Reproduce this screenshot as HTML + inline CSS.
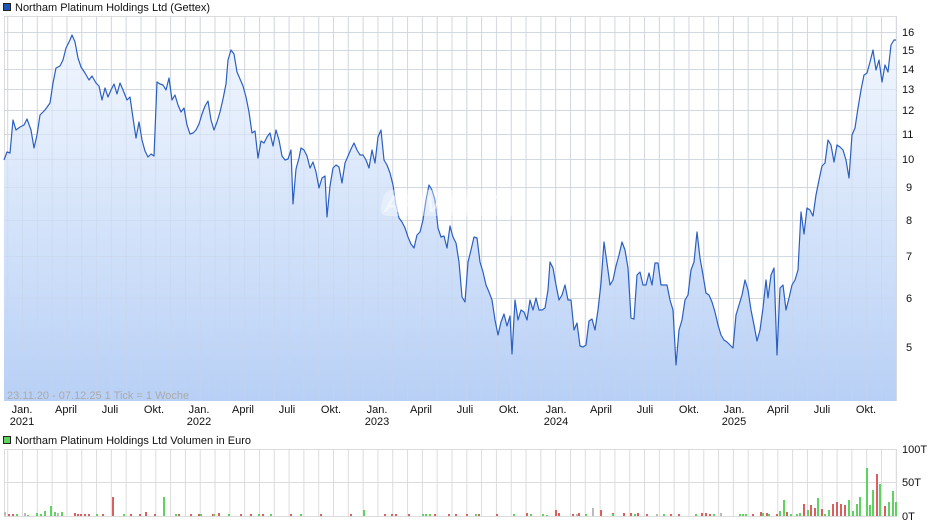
<!DOCTYPE html>
<html><head><meta charset="utf-8"><style>
body{margin:0;background:#fff;width:940px;height:526px;overflow:hidden;font-family:"Liberation Sans",sans-serif}
svg text{font-family:"Liberation Sans",sans-serif;font-size:11px;fill:#111}
</style></head><body>
<svg width="940" height="526" xmlns="http://www.w3.org/2000/svg">
<defs>
<linearGradient id="g" x1="0" y1="0" x2="0" y2="1">
<stop offset="0" stop-color="#f2f7fe"/><stop offset="1" stop-color="#b8d0f6"/></linearGradient>
<pattern id="vg" patternUnits="userSpaceOnUse" x="7.2" y="0" width="14.81" height="10"><rect x="0" y="0" width="1" height="10" fill="#dcdcdc"/></pattern>
<pattern id="vg2" patternUnits="userSpaceOnUse" x="7.2" y="0" width="14.81" height="10"><rect x="0" y="0" width="1" height="10" fill="#c8d4e6" opacity=".45"/></pattern>
</defs>
<rect x="3.5" y="3.5" width="7" height="7" fill="#1e56b8" stroke="#222"/>
<text x="15" y="11">Northam Platinum Holdings Ltd (Gettex)</text>
<rect x="4" y="16" width="893" height="385" fill="url(#vg)"/>
<g stroke="#dcdcdc" stroke-width="1">
<line x1="4" x2="897" y1="16.5" y2="16.5"/><line x1="4" x2="897" y1="32.5" y2="32.5"/><line x1="4" x2="897" y1="50.5" y2="50.5"/><line x1="4" x2="897" y1="69.5" y2="69.5"/><line x1="4" x2="897" y1="89.5" y2="89.5"/><line x1="4" x2="897" y1="110.5" y2="110.5"/><line x1="4" x2="897" y1="134.5" y2="134.5"/><line x1="4" x2="897" y1="159.5" y2="159.5"/><line x1="4" x2="897" y1="187.5" y2="187.5"/><line x1="4" x2="897" y1="220.5" y2="220.5"/><line x1="4" x2="897" y1="256.5" y2="256.5"/><line x1="4" x2="897" y1="298.5" y2="298.5"/><line x1="4" x2="897" y1="347.5" y2="347.5"/>
<line x1="4.5" x2="4.5" y1="16" y2="401"/><line x1="896.5" x2="896.5" y1="16" y2="401"/>
</g>
<path fill="url(#g)" d="M4,160 L7,152 10,153 13,120 16,130 20,127 24,125 27,119 31,130 34,148 37,135 40,115 45,110 50,103 53,83 56,68 60,66 63,60 66,48 70,40 72,35 75,42 78,58 81,67 85,73 89,80 92,76 96,83 99,86 102,100 105,88 108,97 111,90 114,84 117,94 120,83 123,90 127,100 130,97 133,118 136,138 139,122 142,140 145,151 148,157 151,154 154,156 157,82 160,84 163,85 166,90 169,78 172,100 175,95 178,105 181,112 184,108 187,125 190,134 193,133 196,130 199,124 202,114 205,106 208,101 211,120 214,130 217,122 220,112 223,99 226,84 228,60 231,50 234,54 237,72 240,79 243,86 246,97 249,112 252,133 255,131 258,158 261,141 264,143 267,137 270,133 273,146 276,130 279,140 282,156 285,160 288,159 291,150 293,204 296,169 299,158 301,148 304,150 307,156 310,168 313,162 316,172 319,188 322,178 325,176 327,217 330,186 333,168 336,165 339,167 342,183 345,163 348,156 351,149 354,143 357,150 360,155 363,155 366,160 369,168 372,150 375,163 378,137 381,130 384,160 387,165 390,173 393,185 396,205 399,218 402,222 405,228 408,237 411,244 414,248 417,235 420,232 423,220 426,200 429,185 432,190 435,200 438,228 441,237 444,236 447,248 450,226 453,237 456,243 459,262 462,297 465,302 468,262 471,250 474,237 477,238 480,262 483,272 486,285 489,292 492,300 495,320 498,335 501,322 504,314 507,326 510,316 512,354 515,300 518,320 521,310 524,312 527,320 530,300 533,310 536,298 539,310 542,310 545,308 548,290 550,262 553,268 556,285 559,300 562,295 565,285 568,300 571,300 574,330 577,323 580,346 583,347 586,345 589,321 592,319 595,330 598,310 601,283 604,242 607,263 610,285 613,280 616,266 619,255 622,242 625,250 628,268 631,318 634,319 637,275 640,272 643,285 646,285 649,273 652,285 655,263 658,263 661,285 664,285 667,285 670,300 673,310 676,365 679,330 682,320 685,300 688,295 691,270 694,262 697,232 700,258 703,275 706,293 709,295 712,302 715,312 718,325 721,335 724,340 727,342 730,345 733,348 736,315 739,305 742,295 745,280 748,290 751,310 754,325 757,341 760,330 763,308 766,280 768,298 771,275 774,268 777,355 780,288 783,285 786,310 789,298 792,285 795,280 798,270 801,212 804,234 807,208 810,210 813,216 816,195 819,180 822,166 825,163 828,140 831,145 834,162 837,145 840,147 843,150 846,160 849,178 852,135 855,128 858,108 861,90 864,75 867,73 870,62 873,50 876,70 879,60 882,82 885,65 888,72 891,45 894,40 896,40 896,401 4,401 Z"/>
<rect x="4" y="16" width="893" height="385" fill="url(#vg2)"/>
<g stroke="#c8d4e6" stroke-opacity=".45"><line x1="4" x2="896" y1="32.5" y2="32.5"/><line x1="4" x2="896" y1="50.5" y2="50.5"/><line x1="4" x2="896" y1="69.5" y2="69.5"/><line x1="4" x2="896" y1="89.5" y2="89.5"/><line x1="4" x2="896" y1="110.5" y2="110.5"/><line x1="4" x2="896" y1="134.5" y2="134.5"/><line x1="4" x2="896" y1="159.5" y2="159.5"/><line x1="4" x2="896" y1="187.5" y2="187.5"/><line x1="4" x2="896" y1="347.5" y2="347.5"/><line x1="4" x2="896" y1="298.5" y2="298.5"/><line x1="4" x2="896" y1="256.5" y2="256.5"/><line x1="4" x2="896" y1="220.5" y2="220.5"/></g>
<polyline fill="none" stroke="#2c5fc2" stroke-width="1.2" stroke-linejoin="round" points="4,160 7,152 10,153 13,120 16,130 20,127 24,125 27,119 31,130 34,148 37,135 40,115 45,110 50,103 53,83 56,68 60,66 63,60 66,48 70,40 72,35 75,42 78,58 81,67 85,73 89,80 92,76 96,83 99,86 102,100 105,88 108,97 111,90 114,84 117,94 120,83 123,90 127,100 130,97 133,118 136,138 139,122 142,140 145,151 148,157 151,154 154,156 157,82 160,84 163,85 166,90 169,78 172,100 175,95 178,105 181,112 184,108 187,125 190,134 193,133 196,130 199,124 202,114 205,106 208,101 211,120 214,130 217,122 220,112 223,99 226,84 228,60 231,50 234,54 237,72 240,79 243,86 246,97 249,112 252,133 255,131 258,158 261,141 264,143 267,137 270,133 273,146 276,130 279,140 282,156 285,160 288,159 291,150 293,204 296,169 299,158 301,148 304,150 307,156 310,168 313,162 316,172 319,188 322,178 325,176 327,217 330,186 333,168 336,165 339,167 342,183 345,163 348,156 351,149 354,143 357,150 360,155 363,155 366,160 369,168 372,150 375,163 378,137 381,130 384,160 387,165 390,173 393,185 396,205 399,218 402,222 405,228 408,237 411,244 414,248 417,235 420,232 423,220 426,200 429,185 432,190 435,200 438,228 441,237 444,236 447,248 450,226 453,237 456,243 459,262 462,297 465,302 468,262 471,250 474,237 477,238 480,262 483,272 486,285 489,292 492,300 495,320 498,335 501,322 504,314 507,326 510,316 512,354 515,300 518,320 521,310 524,312 527,320 530,300 533,310 536,298 539,310 542,310 545,308 548,290 550,262 553,268 556,285 559,300 562,295 565,285 568,300 571,300 574,330 577,323 580,346 583,347 586,345 589,321 592,319 595,330 598,310 601,283 604,242 607,263 610,285 613,280 616,266 619,255 622,242 625,250 628,268 631,318 634,319 637,275 640,272 643,285 646,285 649,273 652,285 655,263 658,263 661,285 664,285 667,285 670,300 673,310 676,365 679,330 682,320 685,300 688,295 691,270 694,262 697,232 700,258 703,275 706,293 709,295 712,302 715,312 718,325 721,335 724,340 727,342 730,345 733,348 736,315 739,305 742,295 745,280 748,290 751,310 754,325 757,341 760,330 763,308 766,280 768,298 771,275 774,268 777,355 780,288 783,285 786,310 789,298 792,285 795,280 798,270 801,212 804,234 807,208 810,210 813,216 816,195 819,180 822,166 825,163 828,140 831,145 834,162 837,145 840,147 843,150 846,160 849,178 852,135 855,128 858,108 861,90 864,75 867,73 870,62 873,50 876,70 879,60 882,82 885,65 888,72 891,45 894,40 896,40"/>
<rect x="385" y="190" width="140" height="26" rx="8" fill="#fff" opacity=".35" transform="skewX(-12) translate(40,0)"/>
<text x="384" y="212" style="font-size:24px;font-weight:bold;font-style:italic;fill:#fff;opacity:.5">ARIVA.DE</text>
<text x="7" y="399" style="fill:#aaa;font-size:11px">23.11.20 - 07.12.25   1 Tick = 1 Woche</text>
<g>
<text x="902" y="36">16</text><text x="902" y="54">15</text><text x="902" y="73">14</text><text x="902" y="93">13</text><text x="902" y="114">12</text><text x="902" y="138">11</text><text x="902" y="163">10</text><text x="906" y="191">9</text><text x="906" y="224">8</text><text x="906" y="260">7</text><text x="906" y="302">6</text><text x="906" y="351">5</text>
</g>
<g text-anchor="middle">
<text x="22" y="413">Jan.</text><text x="22" y="425">2021</text><text x="66" y="413">April</text><text x="110" y="413">Juli</text><text x="154" y="413">Okt.</text>
<text x="199" y="413">Jan.</text><text x="199" y="425">2022</text><text x="243" y="413">April</text><text x="287" y="413">Juli</text><text x="331" y="413">Okt.</text>
<text x="377" y="413">Jan.</text><text x="377" y="425">2023</text><text x="421" y="413">April</text><text x="465" y="413">Juli</text><text x="509" y="413">Okt.</text>
<text x="556" y="413">Jan.</text><text x="556" y="425">2024</text><text x="601" y="413">April</text><text x="645" y="413">Juli</text><text x="689" y="413">Okt.</text>
<text x="734" y="413">Jan.</text><text x="734" y="425">2025</text><text x="778" y="413">April</text><text x="822" y="413">Juli</text><text x="866" y="413">Okt.</text>
</g>
<rect x="3.5" y="436.5" width="7" height="7" fill="#5fd35f" stroke="#222"/>
<text x="15" y="444">Northam Platinum Holdings Ltd Volumen in Euro</text>
<rect x="4" y="449" width="893" height="67" fill="url(#vg)"/>
<g stroke="#dcdcdc"><line x1="4" x2="897" y1="449.5" y2="449.5"/><line x1="4" x2="897" y1="482.5" y2="482.5"/><line x1="4" x2="897" y1="516.5" y2="516.5"/><line x1="4.5" x2="4.5" y1="449" y2="517"/><line x1="896.5" x2="896.5" y1="449" y2="517"/></g>
<g fill="#db5f5f">
<rect x="8" y="514" width="2" height="2"/><rect x="12" y="514" width="2" height="2"/><rect x="74" y="513" width="2" height="3"/><rect x="77" y="514" width="2" height="2"/><rect x="80" y="514" width="2" height="2"/><rect x="84" y="514" width="2" height="2"/><rect x="88" y="514" width="2" height="2"/><rect x="102" y="514" width="2" height="2"/><rect x="112" y="497" width="2" height="19"/><rect x="130" y="514" width="2" height="2"/><rect x="139" y="514" width="2" height="2"/><rect x="145" y="512" width="2" height="4"/><rect x="154" y="514" width="2" height="2"/><rect x="178" y="514" width="2" height="2"/><rect x="190" y="514" width="2" height="2"/><rect x="198" y="514" width="2" height="2"/><rect x="212" y="514" width="2" height="2"/><rect x="218" y="513" width="2" height="3"/><rect x="240" y="514" width="2" height="2"/><rect x="250" y="514" width="2" height="2"/><rect x="262" y="514" width="2" height="2"/><rect x="290" y="514" width="2" height="2"/><rect x="320" y="514" width="2" height="2"/><rect x="350" y="514" width="2" height="2"/>
<rect x="384" y="514" width="2" height="2"/><rect x="391" y="514" width="2" height="2"/><rect x="395" y="514" width="2" height="2"/><rect x="408" y="514" width="2" height="2"/><rect x="434" y="514" width="2" height="2"/><rect x="448" y="514" width="2" height="2"/><rect x="455" y="514" width="2" height="2"/><rect x="466" y="514" width="2" height="2"/><rect x="478" y="514" width="2" height="2"/><rect x="496" y="514" width="2" height="2"/><rect x="526" y="513" width="2" height="3"/><rect x="555" y="510" width="2" height="6"/><rect x="558" y="513" width="2" height="3"/><rect x="572" y="514" width="2" height="2"/><rect x="578" y="513" width="2" height="3"/><rect x="600" y="510" width="2" height="6"/><rect x="612" y="513" width="2" height="3"/><rect x="623" y="513" width="2" height="3"/><rect x="630" y="513" width="2" height="3"/><rect x="637" y="513" width="2" height="3"/><rect x="646" y="514" width="2" height="2"/><rect x="670" y="514" width="2" height="2"/><rect x="678" y="514" width="2" height="2"/><rect x="701" y="513" width="2" height="3"/><rect x="705" y="513" width="2" height="3"/><rect x="709" y="514" width="2" height="2"/>
<rect x="752" y="514" width="2" height="2"/><rect x="766" y="513" width="2" height="3"/><rect x="776" y="514" width="2" height="2"/><rect x="786" y="512" width="2" height="4"/><rect x="803" y="504" width="2" height="12"/><rect x="810" y="505" width="2" height="11"/><rect x="814" y="508" width="2" height="8"/><rect x="821" y="509" width="2" height="7"/><rect x="832" y="504" width="2" height="12"/><rect x="836" y="502" width="2" height="14"/><rect x="840" y="504" width="2" height="12"/><rect x="844" y="505" width="2" height="11"/><rect x="876" y="474" width="2" height="42"/><rect x="884" y="506" width="2" height="10"/><rect x="760" y="512" width="2" height="4"/>
</g>
<g fill="#5fd35f">
<rect x="16" y="514" width="2" height="2"/><rect x="27" y="515" width="2" height="1"/><rect x="36" y="513" width="2" height="3"/><rect x="40" y="514" width="2" height="2"/><rect x="44" y="511" width="2" height="5"/><rect x="50" y="506" width="2" height="10"/><rect x="54" y="512" width="2" height="4"/><rect x="61" y="512" width="2" height="4"/><rect x="96" y="514" width="2" height="2"/><rect x="123" y="514" width="2" height="2"/><rect x="163" y="497" width="2" height="19"/><rect x="175" y="514" width="2" height="2"/><rect x="200" y="514" width="2" height="2"/><rect x="213" y="514" width="2" height="2"/><rect x="228" y="514" width="2" height="2"/><rect x="258" y="514" width="2" height="2"/><rect x="270" y="514" width="2" height="2"/><rect x="300" y="514" width="2" height="2"/><rect x="363" y="510" width="2" height="6"/><rect x="422" y="514" width="2" height="2"/><rect x="425" y="514" width="2" height="2"/><rect x="429" y="514" width="2" height="2"/><rect x="475" y="514" width="2" height="2"/><rect x="513" y="514" width="2" height="2"/><rect x="530" y="514" width="2" height="2"/><rect x="542" y="514" width="2" height="2"/><rect x="546" y="515" width="2" height="1"/><rect x="585" y="514" width="2" height="2"/><rect x="612" y="514" width="2" height="2"/><rect x="634" y="514" width="2" height="2"/><rect x="663" y="514" width="2" height="2"/><rect x="695" y="514" width="2" height="2"/><rect x="713" y="514" width="2" height="2"/><rect x="739" y="514" width="2" height="2"/><rect x="742" y="514" width="2" height="2"/><rect x="745" y="514" width="2" height="2"/>
<rect x="762" y="513" width="2" height="3"/><rect x="768" y="514" width="2" height="2"/><rect x="779" y="511" width="2" height="5"/><rect x="783" y="500" width="2" height="16"/><rect x="790" y="514" width="2" height="2"/><rect x="796" y="514" width="2" height="2"/><rect x="799" y="513" width="2" height="3"/><rect x="807" y="510" width="2" height="6"/><rect x="817" y="498" width="2" height="18"/><rect x="824" y="514" width="2" height="2"/><rect x="828" y="510" width="2" height="6"/><rect x="848" y="500" width="2" height="16"/><rect x="852" y="511" width="2" height="5"/><rect x="856" y="504" width="2" height="12"/><rect x="859" y="497" width="2" height="19"/><rect x="866" y="468" width="2" height="48"/><rect x="869" y="505" width="2" height="11"/><rect x="872" y="490" width="2" height="26"/><rect x="879" y="484" width="2" height="32"/><rect x="888" y="502" width="2" height="14"/><rect x="892" y="491" width="2" height="25"/><rect x="895" y="502" width="2" height="14"/>
</g>
<g fill="#bbb"><rect x="4" y="512" width="2" height="4"/><rect x="24" y="513" width="2" height="3"/><rect x="57" y="513" width="2" height="3"/><rect x="592" y="508" width="2" height="8"/><rect x="576" y="514" width="2" height="2"/><rect x="720" y="513" width="2" height="3"/><rect x="656" y="514" width="2" height="2"/></g>
<text x="902" y="453">100T</text><text x="902" y="486">50T</text><text x="902" y="520">0T</text>
</svg>
</body></html>
